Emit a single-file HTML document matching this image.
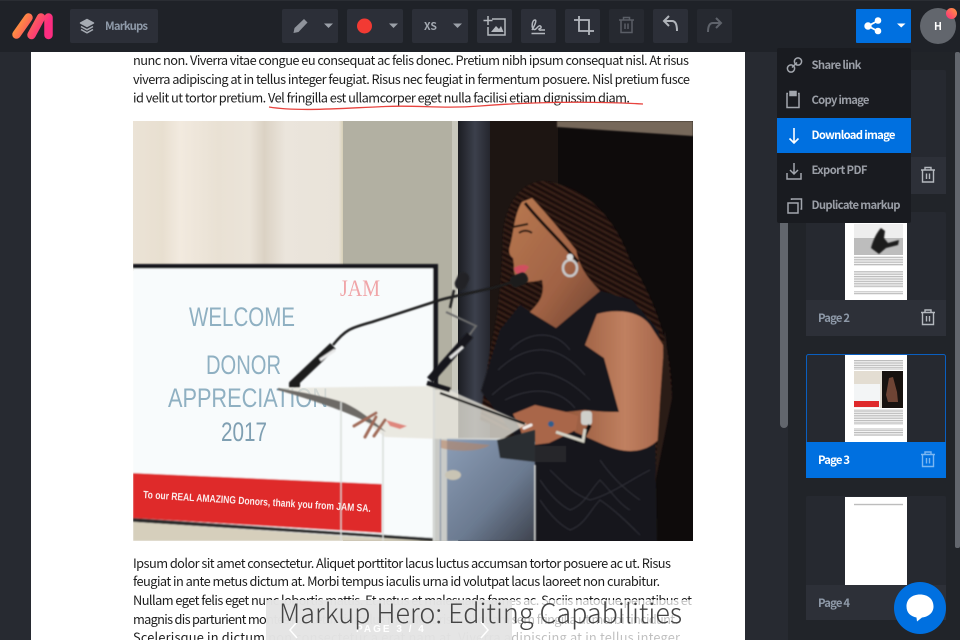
<!DOCTYPE html>
<html><head><meta charset="utf-8"><style>
html,body{margin:0;padding:0;background:#22252b;width:960px;height:640px;overflow:hidden}
svg{display:block}
.d{font-family:"Noto Sans CJK JP","Liberation Sans",sans-serif;font-size:12.800px;fill:#1c1c1c}
.u{font-family:"Noto Sans CJK JP","Liberation Sans",sans-serif;font-weight:700;font-size:11.300px}
.s{font-family:"Liberation Sans",sans-serif;fill:#8fb0c2}
</style></head><body>
<svg width="960" height="640" viewBox="0 0 960 640" xmlns="http://www.w3.org/2000/svg">
<defs>
<linearGradient id="lg" gradientUnits="userSpaceOnUse" x1="14" y1="14" x2="50" y2="36"><stop offset="0" stop-color="#ffb52e"/><stop offset=".45" stop-color="#fd6258"/><stop offset=".8" stop-color="#fb2d80"/></linearGradient>
<linearGradient id="dot" x1="1" y1="0" x2="0" y2="1"><stop offset="0" stop-color="#ff9a3c"/><stop offset="1" stop-color="#fb2d80"/></linearGradient>
<linearGradient id="cur" x1="0" y1="0" x2="1" y2="0">
<stop offset="0" stop-color="#ebe3d6"/><stop offset=".14" stop-color="#e8dfd0"/><stop offset=".22" stop-color="#f2eadf"/><stop offset=".4" stop-color="#e9e1d4"/><stop offset=".55" stop-color="#ebe4d9"/><stop offset=".62" stop-color="#dbd2c4"/><stop offset=".72" stop-color="#ebe5dc"/><stop offset=".97" stop-color="#e9e3d9"/><stop offset="1" stop-color="#cfc8a8"/></linearGradient>
<linearGradient id="col" x1="0" y1="0" x2="1" y2="0"><stop offset="0" stop-color="#1b1d22"/><stop offset=".5" stop-color="#3c404c"/><stop offset="1" stop-color="#22232a"/></linearGradient>
<linearGradient id="gl" x1="0" y1="0" x2="1" y2="1"><stop offset="0" stop-color="#8d9fb8"/><stop offset=".6" stop-color="#6b7a90"/><stop offset="1" stop-color="#3e434e"/></linearGradient>
<linearGradient id="sk" x1="0" y1="0" x2="1" y2="0"><stop offset="0" stop-color="#94583c"/><stop offset=".6" stop-color="#c08060"/><stop offset="1" stop-color="#a5654a"/></linearGradient>
<linearGradient id="fc" x1="0" y1="0" x2="1" y2="1"><stop offset="0" stop-color="#b87850"/><stop offset=".6" stop-color="#a06244"/><stop offset="1" stop-color="#6e4230"/></linearGradient>
<pattern id="br" width="5" height="5" patternUnits="userSpaceOnUse" patternTransform="rotate(28)"><rect width="5" height="5" fill="#1a0f0c"/><rect y="0" width="5" height="1.800" fill="#3a2219"/></pattern>
<pattern id="tl" width="6" height="2.400" patternUnits="userSpaceOnUse"><rect width="6" height="2.400" fill="#f4f4f4"/><rect width="6" height="1.200" fill="#bcbcbc"/></pattern>
<filter id="b1" x="-5%" y="-5%" width="110%" height="110%"><feGaussianBlur stdDeviation=".7"/></filter>
<clipPath id="ph"><rect x="133" y="121" width="560" height="420"/></clipPath>
<clipPath id="dr"><path d="M500 330L520 305L556 328L600 291L632 300L658 330L662 350L655 420L657 541H535V463L481 391Z"/></clipPath>
</defs>

<!-- backgrounds -->
<rect width="960" height="640" fill="#23262c"/>
<rect x="0" y="52" width="31" height="588" fill="#272a31"/>
<rect x="745" y="52" width="43" height="588" fill="#272a31"/>
<rect x="788" y="52" width="172" height="588" fill="#212429"/>

<!-- document page -->
<rect x="31" y="52" width="714" height="588" fill="#fff"/>
<g class="d">
<text x="133" y="65" textLength="556" lengthAdjust="spacing">nunc non. Viverra vitae congue eu consequat ac felis donec. Pretium nibh ipsum consequat nisl. At risus</text>
<text x="133" y="84" textLength="557" lengthAdjust="spacing">viverra adipiscing at in tellus integer feugiat. Risus nec feugiat in fermentum posuere. Nisl pretium fusce</text>
<text x="133" y="102.500" textLength="497" lengthAdjust="spacing">id velit ut tortor pretium. Vel fringilla est ullamcorper eget nulla facilisi etiam dignissim diam.</text>
<text x="133" y="568" textLength="538" lengthAdjust="spacing">Ipsum dolor sit amet consectetur. Aliquet porttitor lacus luctus accumsan tortor posuere ac ut. Risus</text>
<text x="133" y="586" textLength="527" lengthAdjust="spacing">feugiat in ante metus dictum at. Morbi tempus iaculis urna id volutpat lacus laoreet non curabitur.</text>
<text x="133" y="605" textLength="559" lengthAdjust="spacing">Nullam eget felis eget nunc lobortis mattis. Et netus et malesuada fames ac. Sociis natoque penatibus et</text>
<text x="133" y="624" textLength="545" lengthAdjust="spacing">magnis dis parturient montes nascetur ridiculus mus. Mauris in aliquam sem fringilla ut morbi tincidunt.</text>
<text x="133" y="642" textLength="547" lengthAdjust="spacing">Scelerisque in dictum non consectetur a erat nam at. Viverra adipiscing at in tellus integer</text>
</g>
<path d="M269 107C300 112 345 108 385 106.500C420 105 440 109 480 106C530 102 590 101 643 104" fill="none" stroke="#e8443f" stroke-width="1.300"/>

<!-- photo -->
<g clip-path="url(#ph)">
<rect x="133" y="121" width="212" height="150" fill="url(#cur)"/>
<rect x="343" y="121" width="116" height="420" fill="#b2b0a2"/>
<rect x="452" y="121" width="7" height="420" fill="#c8c7bc"/>
<rect x="458" y="121" width="34" height="420" fill="url(#col)"/>
<rect x="490" y="121" width="203" height="420" fill="#0e0b0b"/>
<rect x="490" y="121" width="68" height="420" fill="#1d1512"/>
<path d="M557 121H693V136L557 127Z" fill="#76685a" filter="url(#b1)"/>
<g filter="url(#b1)">
<rect x="133" y="268" width="300" height="270" fill="#f8fbfc"/>
<rect x="133" y="264" width="305" height="4.500" fill="#15171a"/>
<rect x="433" y="264" width="5" height="126" fill="#15171a"/>
<rect x="433" y="390" width="25" height="151" fill="#c9cac6"/>
<path d="M133 473L382 484V533L133 518Z" fill="#df2a2c"/>
<path d="M133 518L433 538V541L133 522Z" fill="#2a2a2a"/>
<path d="M133 522L420 541H133Z" fill="#d6cfbc"/>
</g>
<text class="s" x="189" y="326" font-size="27" textLength="106" lengthAdjust="spacingAndGlyphs">WELCOME</text>
<text class="s" x="206" y="374" font-size="27" textLength="75" lengthAdjust="spacingAndGlyphs">DONOR</text>
<text class="s" x="168" y="407" font-size="27" textLength="160" lengthAdjust="spacingAndGlyphs">APPRECIATION</text>
<text class="s" x="221" y="441" font-size="27" textLength="46" lengthAdjust="spacingAndGlyphs" style="fill:#7f9fb2">2017</text>
<text x="340" y="296" font-family="Liberation Serif,serif" font-size="23" fill="#f0a5a8" textLength="40" lengthAdjust="spacingAndGlyphs">JAM</text>
<text x="143" y="498" transform="rotate(3.500 143 498)" font-family="Liberation Sans,sans-serif" font-weight="700" font-size="10.500" fill="#fbeaea" textLength="228" lengthAdjust="spacingAndGlyphs">To our REAL AMAZING Donors, thank you from JAM SA.</text>

<!-- woman -->
<g filter="url(#b1)">
<path d="M542 181C520 183 505 205 503 235C502 270 500 310 491 345L480 420L655 483L672 398C672 345 655 300 630 260C618 225 590 185 542 181Z" fill="url(#br)"/>
<path d="M500 330L520 305L556 328L600 291L632 300L658 330L662 350L655 420L657 541H535V463L481 391Z" fill="#17171b"/>
<path d="M522 202C514 215 514 232 510 246C508 252 510 256 513 258L514 265C513 272 516 280 521 281C530 283 536 281 542 280C545 295 540 302 530 312L556 328L600 291C590 280 580 270 576 250C562 232 545 212 532 198Z" fill="url(#fc)"/>
<path d="M525 203C540 222 560 240 578 262" stroke="#150d0a" stroke-width="3" fill="none"/>
<path d="M585 345L597 314C620 308 640 312 650 325L663 345L664 398L658 440C645 453 625 455 600 443L575 432L566 412L585 410C600 412 610 412 619 412L604 358Z" fill="url(#sk)"/>
<path d="M513 414L535 405L566 412L578 416L576 430L549 443L525 446L520 428Z" fill="#a9664a"/>
<path d="M514 268C520 264 526 264 529 267L522 276C518 276 515 273 514 268Z" fill="#d0505f"/>
<path d="M513 227L528 224M519 233C523 230 528 230 532 233" stroke="#20140f" stroke-width="2" fill="none"/>
<ellipse cx="570" cy="268" rx="7" ry="8" fill="none" stroke="#c8c8c8" stroke-width="2.500"/>
<circle cx="570" cy="257" r="3.300" fill="#dcdcdc"/>
<rect x="498" y="446" width="68" height="16" fill="#26282b"/>
<rect x="581" y="411" width="11" height="14" rx="3" fill="#cfcfca"/>
<path d="M590 425L582 440L575 441" stroke="#0f0f10" stroke-width="4" fill="none"/>
<path d="M556 432L583 441L585 429" stroke="#d4d2c5" stroke-width="3" fill="none"/>
<circle cx="551" cy="424" r="3" fill="#2d5e8c"/>
<path d="M524 428l7-3M524 436l7-1M527 445l6-2" stroke="#f3eeea" stroke-width="3" stroke-linecap="round"/>
<path d="M665 330L672 398L655 483L660 400Z" fill="#2a1a16"/>
</g>
<g clip-path="url(#dr)" fill="none" stroke="#34353c" stroke-width="1.200" opacity=".85" filter="url(#b1)">
<path d="M498 370C530 340 560 345 585 375M492 395C530 360 560 370 590 400M510 350C530 330 555 330 570 350M505 400C535 385 560 390 575 408M540 480C550 495 560 505 570 510C585 505 590 490 600 480C610 490 620 505 630 510M540 500C550 515 560 525 570 530C585 525 590 510 600 500C615 510 630 525 640 535M550 470C565 485 575 495 590 500C610 495 630 480 650 470M600 460C610 475 625 490 640 500"/>
</g>
<!-- lectern -->
<g filter="url(#b1)">
<path d="M440 438H500L535 462V541H440Z" fill="url(#gl)"/>
<rect x="441" y="438" width="6" height="103" fill="#c9cbc8"/>
<ellipse cx="453" cy="475" rx="8" ry="5" fill="#c9c4b4"/>
<path d="M278 388L440 386L527 424L501 440L440 439L385 437L340 403Z" fill="#e7e4da" opacity=".78"/>
<path d="M278 388C300 392 325 396 345 403C360 410 375 422 386 432C365 420 340 408 278 390Z" fill="#6d6a66"/>
<path d="M440 393L525 424" stroke="#1a1a1c" stroke-width="2.500"/>
<path d="M386 420L407 426L400 429L390 426Z" fill="#d95b50" opacity=".7"/>
<path d="M354 426L376 413M365 437L376 417M374 436L385 420" stroke="#a06a58" stroke-width="3" stroke-linecap="round"/>
<path d="M341 402V541M383 432V541M434 388V541M535 465V541" stroke="#d9dcda" stroke-width="1.500"/>
<path d="M497 440L535 430V462L500 458Z" fill="#2c2d31"/>
<path d="M441 440L490 445C480 452 455 452 441 448Z" fill="#b9835f" opacity=".55"/>
<path d="M292 385L333 346" stroke="#1a1b1f" stroke-width="8"/>
<path d="M289 385h11" stroke="#1a1b1f" stroke-width="5"/>
<path d="M333 345C345 330 350 328 372 322L440 300C470 292 490 290 512 282" fill="none" stroke="#1b1b1e" stroke-width="2.500"/>
<rect x="510" y="274" width="18" height="12" rx="5" transform="rotate(-22 519 280)" fill="#1a1a1c"/>
<path d="M320 360L335 350" stroke="#e8e8e8" stroke-width="3"/>
<path d="M450 308L454 290" stroke="#222" stroke-width="2.500"/>
<rect x="456" y="272" width="12" height="18" rx="6" transform="rotate(25 462 281)" fill="#242427"/>
<path d="M446 312L476 326L462 345" stroke="#6c6c6c" stroke-width="2" fill="none"/>
<path d="M430 380L470 335" stroke="#17181c" stroke-width="8"/>
<path d="M427 383L450 390" stroke="#17181c" stroke-width="5"/>
<path d="M450 358L463 347" stroke="#e0e0e0" stroke-width="3"/>
</g>
</g>

<!-- bottom overlay -->
<rect x="266" y="600" width="430" height="40" fill="#fff" opacity=".72"/>
<rect x="266" y="600" width="246" height="40" fill="#e3e3e3" opacity=".92"/>
<path d="M297 622L290 630L297 638M481 622L488 630L481 638" fill="none" stroke="#fff" stroke-width="1.500"/>
<text x="356" y="632" font-family="Liberation Sans,sans-serif" font-weight="700" font-size="10" letter-spacing="2" fill="#fff">PAGE 3 / 4</text>
<text x="279" y="623" font-family="Noto Sans CJK JP,Liberation Sans,sans-serif" font-weight="300" font-size="27" fill="#444" textLength="403" lengthAdjust="spacingAndGlyphs">Markup Hero: Editing Capabilities</text>

<!-- top toolbar -->
<rect width="960" height="52" fill="#1f2228"/>
<rect y="0" width="960" height="1" fill="#2a2d33"/>
<g fill="#2c2f38">
<rect x="70" y="9" width="88" height="34" rx="2"/>
<rect x="282" y="9" width="56" height="34" rx="2"/>
<rect x="347" y="9" width="56" height="34" rx="2"/>
<rect x="412" y="9" width="56" height="34" rx="2"/>
<rect x="477" y="9" width="35" height="34" rx="2"/>
<rect x="521" y="9" width="35" height="34" rx="2"/>
<rect x="565" y="9" width="35" height="34" rx="2"/>
<rect x="609" y="9" width="35" height="34" rx="2" fill="#262930"/>
<rect x="653" y="9" width="35" height="34" rx="2"/>
<rect x="697" y="9" width="35" height="34" rx="2" fill="#262930"/>
</g>
<!-- logo -->
<g fill="none" stroke="url(#lg)" stroke-width="8.500" stroke-linecap="round">
<path d="M16.500 34.500L28.500 17.500"/>
<path d="M31.500 35L41 17.500"/>
<path d="M48.500 17.500V35"/>
</g>
<!-- markups -->
<g fill="none" stroke="#a6abb3" stroke-width="1.500" stroke-linejoin="round">
<path d="M87 19.500L93.500 23L87 26.500L80.500 23Z" fill="#a6abb3"/>
<path d="M81 26.500L87 29.800L93 26.500"/>
<path d="M81 29.500L87 32.800L93 29.500"/>
</g>
<text class="u" x="105" y="30" fill="#8e99a8" textLength="43" lengthAdjust="spacing">Markups</text>
<!-- pen -->
<path d="M293.500 33L294.500 28L304 19L307.500 22.500L298.500 32Z" fill="#8f939b"/>
<path d="M324 23.500h9l-4.500 4.500z" fill="#9ba0a8"/>
<circle cx="364.500" cy="26" r="7.500" fill="#f23a33"/>
<path d="M389 23.500h9l-4.500 4.500z" fill="#9ba0a8"/>
<text x="424" y="30" font-family="Noto Sans CJK JP,sans-serif" font-weight="700" font-size="10.500" fill="#a4a9b1">XS</text>
<path d="M453 23.500h9l-4.500 4.500z" fill="#9ba0a8"/>
<!-- image add -->
<g fill="none" stroke="#b4b8be" stroke-width="1.500">
<path d="M492 19H505V35H488V27"/>
<path d="M488 16V25M483.500 20.500H492.500"/>
<path d="M491 32L496 26L499 29L501 26L503.500 32Z" fill="#b4b8be" stroke="none"/>
</g>
<!-- signature -->
<g fill="none" stroke="#b4b8be" stroke-width="1.500">
<path d="M532 30C535 25 537 20 535 20C532 20 531 28 534 29.500C536 30 537 27 539 26C541 25 542 28 540 28.500C538 29 539 30.500 541 30H545"/>
<path d="M531.500 33.500H545"/>
</g>
<!-- crop -->
<path d="M574 20H589V35M579 16V31H594" fill="none" stroke="#b4b8be" stroke-width="1.800"/>
<!-- trash -->
<g fill="none" stroke="#5a5e66" stroke-width="1.500">
<path d="M619 20H634M623.500 20V17.500H629.500V20M621 20V32.500H632V20M625 23.500V29M628 23.500V29"/>
</g>
<!-- undo -->
<path d="M669 16L664 21L669 26M664.500 21H672C675.500 21 677 24 677 31" fill="none" stroke="#b0b4ba" stroke-width="2"/>
<!-- redo -->
<path d="M716 18L721 23L716 28M720.500 23H713C709.500 23 708 26 708 32" fill="none" stroke="#5f636b" stroke-width="2"/>

<!-- share -->
<rect x="856" y="9" width="55" height="34" rx="1" fill="#0070e0"/>
<g fill="#fff" stroke="#fff">
<path d="M877.500 21L868 26L877.500 31" fill="none" stroke-width="1.800"/>
<circle cx="878" cy="20.500" r="2.800"/><circle cx="868" cy="26" r="3.200"/><circle cx="878" cy="31" r="2.800"/>
</g>
<path d="M897 23.500h8.500l-4.250 4z" fill="#fff"/>
<!-- avatar -->
<circle cx="938" cy="26" r="18" fill="#62666d"/>
<text x="938" y="30" text-anchor="middle" font-family="Noto Sans CJK JP,sans-serif" font-weight="700" font-size="10.500" fill="#fff">H</text>
<circle cx="951.500" cy="13.500" r="5.500" fill="url(#dot)"/>

<!-- scrollbars -->
<rect x="780" y="52" width="8" height="376" rx="4" fill="#62666d"/>
<rect x="955" y="52" width="5" height="496" rx="2" fill="#62666d"/>

<!-- thumbnails -->
<rect x="806" y="70" width="140" height="124" rx="2" fill="#262930"/>
<rect x="806" y="157" width="140" height="37" fill="#2d3038"/>
<rect x="806" y="212" width="140" height="124" rx="2" fill="#262930"/>
<rect x="806" y="300" width="140" height="36" fill="#2d3038"/>
<rect x="845" y="212" width="62" height="88" fill="#fff"/>
<rect x="854" y="224" width="49" height="31" fill="#bdbdbd"/>
<rect x="854" y="224" width="49" height="14" fill="#eeeeee"/>
<path d="M871 248C873 240 877 232 881 228L885 231L884 238L888 243L899 240L898 245L886 248L879 254Z" fill="#1d1d1d" filter="url(#b1)"/>
<rect x="854" y="256" width="49" height="10" fill="url(#tl)"/>
<rect x="854" y="271" width="49" height="17" fill="url(#tl)"/>
<rect x="854" y="291" width="49" height="4" fill="url(#tl)"/>
<text class="u" x="818" y="322" fill="#8e99a8" textLength="32" lengthAdjust="spacing">Page 2</text>
<g fill="none" stroke="#b4b8be" stroke-width="1.400">
<path d="M921 312.500H935M925 312.500V310H931V312.500M922.500 312.500V324.500H933.500V312.500M926.500 316V321.500M929.500 316V321.500"/>
<path d="M921 170H935M925 170V167.500H931V170M922.500 170V182H933.500V170M926.500 173.500V179M929.500 173.500V179"/>
</g>

<rect x="806.500" y="354.500" width="139" height="123" rx="2" fill="#262930" stroke="#0a5fc0"/>
<rect x="806" y="442" width="140" height="36" fill="#0070e0"/>
<rect x="845" y="355" width="62" height="87" fill="#fff"/>
<rect x="854" y="360" width="49" height="10" fill="url(#tl)"/>
<rect x="854" y="371" width="49" height="37" fill="#e3ddd2"/>
<rect x="882" y="371" width="21" height="37" fill="#17120f"/>
<rect x="854" y="384" width="26" height="24" fill="#f3f5f6"/>
<rect x="854" y="401" width="25" height="6" fill="#df2a2c"/>
<path d="M889 378L893 377L897 392L898 402H888L886 395Z" fill="#6e4434"/>
<rect x="854" y="409" width="49" height="16" fill="url(#tl)"/>
<rect x="854" y="428" width="49" height="8" fill="url(#tl)"/>
<text class="u" x="818" y="464" fill="#fff" textLength="32" lengthAdjust="spacing">Page 3</text>
<path d="M921 454.500H935M925 454.500V452H931V454.500M922.500 454.500V466.500H933.500V454.500M926.500 458V463.500M929.500 458V463.500" fill="none" stroke="#7ab6f2" stroke-width="1.400"/>

<rect x="806" y="496" width="140" height="124" rx="2" fill="#262930"/>
<rect x="806" y="585" width="140" height="35" fill="#2d3038"/>
<rect x="845" y="497" width="62" height="88" fill="#fff"/>
<rect x="854" y="503" width="49" height="2.400" fill="url(#tl)"/>
<text class="u" x="818" y="607" fill="#8e99a8" textLength="32" lengthAdjust="spacing">Page 4</text>

<!-- dropdown -->
<rect x="777" y="48" width="134" height="175" rx="2" fill="#191b20"/>
<rect x="777" y="118" width="134" height="35" fill="#0070e0"/>
<g class="u">
<text x="811.500" y="69" fill="#9a9ea6" textLength="50" lengthAdjust="spacing">Share link</text>
<text x="811.500" y="104" fill="#9a9ea6" textLength="58" lengthAdjust="spacing">Copy image</text>
<text x="811.500" y="139" fill="#fff" textLength="84" lengthAdjust="spacing">Download image</text>
<text x="811.500" y="174" fill="#9a9ea6" textLength="56" lengthAdjust="spacing">Export PDF</text>
<text x="811.500" y="209" fill="#9a9ea6" textLength="89" lengthAdjust="spacing">Duplicate markup</text>
</g>
<g fill="none" stroke="#a2a6ad" stroke-width="1.500">
<circle cx="791" cy="68.500" r="3.600"/><circle cx="798" cy="61.500" r="3.600"/>
<path d="M792 67.500L797 62.500"/>
<path d="M788 93.500H787V107.500H799V93.500H798"/><rect x="790" y="91.500" width="6" height="4" fill="#a2a6ad"/>
<path d="M787 173V179H801V173M794 163V174M790 170L794 174L798 170"/>
<rect x="788" y="203" width="10" height="10"/><path d="M791.500 200V199H801.500V209H800.500"/>
</g>
<path d="M794 128V143M789.500 138.500L794 143L798.500 138.500" fill="none" stroke="#fff" stroke-width="1.600"/>

<!-- chat -->
<circle cx="920" cy="608" r="26" fill="#0070e0"/>
<path d="M920 594.500C928 594.500 933.500 599 933.500 606.500C933.500 613 928 617 922 617.500L917 621.500L916.500 617.500C911 616.500 906.500 613 906.500 606.500C906.500 599 912 594.500 920 594.500Z" fill="#fff"/>
</svg>
</body></html>
